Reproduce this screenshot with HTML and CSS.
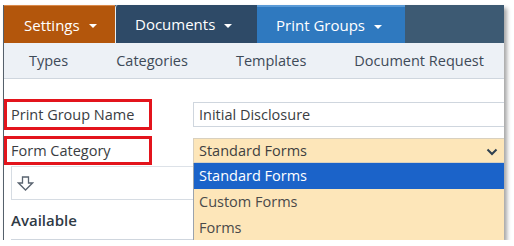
FILE: index.html
```html
<!DOCTYPE html>
<html lang="en">
  <head>
    <meta charset="UTF-8" />
    <title>Print Groups</title>
    <link rel="stylesheet" href="styles.css">
  </head>
  <body>
    <div class="frame">
      <!-- Top tabs -->
      <div class="tabs">
        <div class="tab tab-settings">Settings <span class="caret"></span></div>
        <div class="tab tab-documents">Documents <span class="caret"></span></div>
        <div class="tab tab-print">Print Groups <span class="caret"></span></div>
      </div>

      <!-- Sub navigation -->
      <div class="subnav">
        <span>Types</span>
        <span>Categories</span>
        <span>Templates</span>
        <span>Document Request</span>
      </div>

      <!-- Form -->
      <div class="form">
        <div class="row">
          <div class="label">Print Group Name</div>
          <div class="field">Initial Disclosure</div>
        </div>
        <div class="row row-select">
          <div class="label">Form Category</div>
          <div class="select">
            Standard Forms
            <svg class="chevron" width="12" height="8" viewBox="0 0 12 8">
              <path d="M1.5 1.5 L6 6 L10.5 1.5" fill="none" stroke="#2f4050" stroke-width="2"/>
            </svg>
            <ul class="options">
              <li class="selected">Standard Forms</li>
              <li>Custom Forms</li>
              <li>Forms</li>
            </ul>
          </div>
        </div>

        <div class="move-box">
          <svg width="17" height="15" viewBox="0 0 17 15">
            <path d="M5.5 1 H11.5 V7 H15.5 L8.5 14 L1.5 7 H5.5 Z" fill="none" stroke="#5a6470" stroke-width="1.3"/>
          </svg>
        </div>

        <h3 class="available">Available</h3>
        <div class="list-box"></div>
      </div>
    </div>
  </body>
</html>
```

FILE: styles.css
```css
body {
  margin: 0;
  background: #fff;
  font-family: 'Open Sans', sans-serif;
}

/* outer frame with the screenshot shadow */
.frame {
  margin: 5px 0 0 3px;
  width: 501px;
  height: 235px;
  overflow: hidden;
  background: #fff;
  border-left: 1px solid #55606b;
  box-sizing: border-box;
  box-shadow: 3px 3px 4px rgba(0, 0, 0, 0.35);
}

/* Top tabs */
.tabs {
  display: flex;
  height: 38px;
  background: #3d5a73;
}

.tab {
  display: flex;
  align-items: center;
  flex-shrink: 0;
  color: #fff;
  font-size: 15px;
  box-sizing: border-box;
}

.tab-settings {
  width: 111px;
  padding-left: 20px;
  background: #b3560c;
  border-top: 1px solid #d9894a;
}

.tab-documents {
  width: 142px;
  padding-left: 19px;
  background: #2e4a67;
  border-left: 1px solid #e8edf2;
  border-top-left-radius: 3px;
}

.tab-print {
  width: 148px;
  padding-left: 19px;
  background: #2f79bf;
  border-top: 2px solid #5a9ad6;
}

.caret {
  display: inline-block;
  margin-left: 9px;
  margin-top: 3px;
  border-left: 4px solid transparent;
  border-right: 4px solid transparent;
  border-top: 4px solid #fff;
}

/* Sub navigation */
.subnav {
  display: flex;
  align-items: center;
  gap: 48px;
  height: 35px;
  padding-left: 25px;
  background: #edf1f6;
  border-bottom: 1px solid #cfd6de;
  color: #3e4a58;
  font-size: 14.5px;
}

/* Form area */
.form {
  position: relative;
  padding-top: 20px;
}

.row {
  display: flex;
  align-items: center;
  height: 31px;
}

.row + .row {
  margin-top: 5px;
}

.label {
  flex-shrink: 0;
  width: 148px;
  height: 31px;
  box-sizing: border-box;
  border: 3px solid #e3141c;
  padding-left: 4px;
  display: flex;
  align-items: center;
  color: #3a3d42;
  font-size: 14.5px;
  white-space: nowrap;
}

.row-select .label {
  height: 29px;
}

.field,
.select {
  flex-shrink: 0;
  margin-left: 41px;
  width: 340px;
  height: 25px;
  box-sizing: border-box;
  display: flex;
  align-items: center;
  padding-left: 5px;
  font-size: 14.5px;
  color: #3a3d42;
  border: 1px solid #cfd6de;
}

.field {
  background: #fff;
}

.select {
  position: relative;
  width: 312px;
  background: #fde6b9;
  border-color: #d8d0bf;
  color: #3f3f3f;
}

.chevron {
  position: absolute;
  left: 292px;
  top: 9px;
}

/* open dropdown list */
.options {
  position: absolute;
  left: -1px;
  top: 24px;
  width: 312px;
  margin: 0;
  padding: 0;
  list-style: none;
  background: #fde6b9;
  border: 1px solid #9aa3ad;
  border-top: none;
  box-sizing: border-box;
  z-index: 2;
}

.options li {
  height: 26px;
  line-height: 26px;
  padding-left: 5px;
  font-size: 14.5px;
  color: #4a4a4a;
}

.options li.selected {
  background: #1b63c9;
  color: #fff;
}

.move-box {
  margin: 0 0 0 7px;
  height: 34px;
  box-sizing: border-box;
  border: 1px solid #d6dce3;
  border-top-color: #dde2e8;
  display: flex;
  align-items: center;
  padding-left: 5px;
}

.available {
  margin: 10px 0 0 7px;
  font-size: 15px;
  font-weight: 600;
  color: #2f3a45;
}

.list-box {
  margin: 9px 0 0 7px;
  height: 20px;
  border: 1px solid #cfd6de;
}
```
